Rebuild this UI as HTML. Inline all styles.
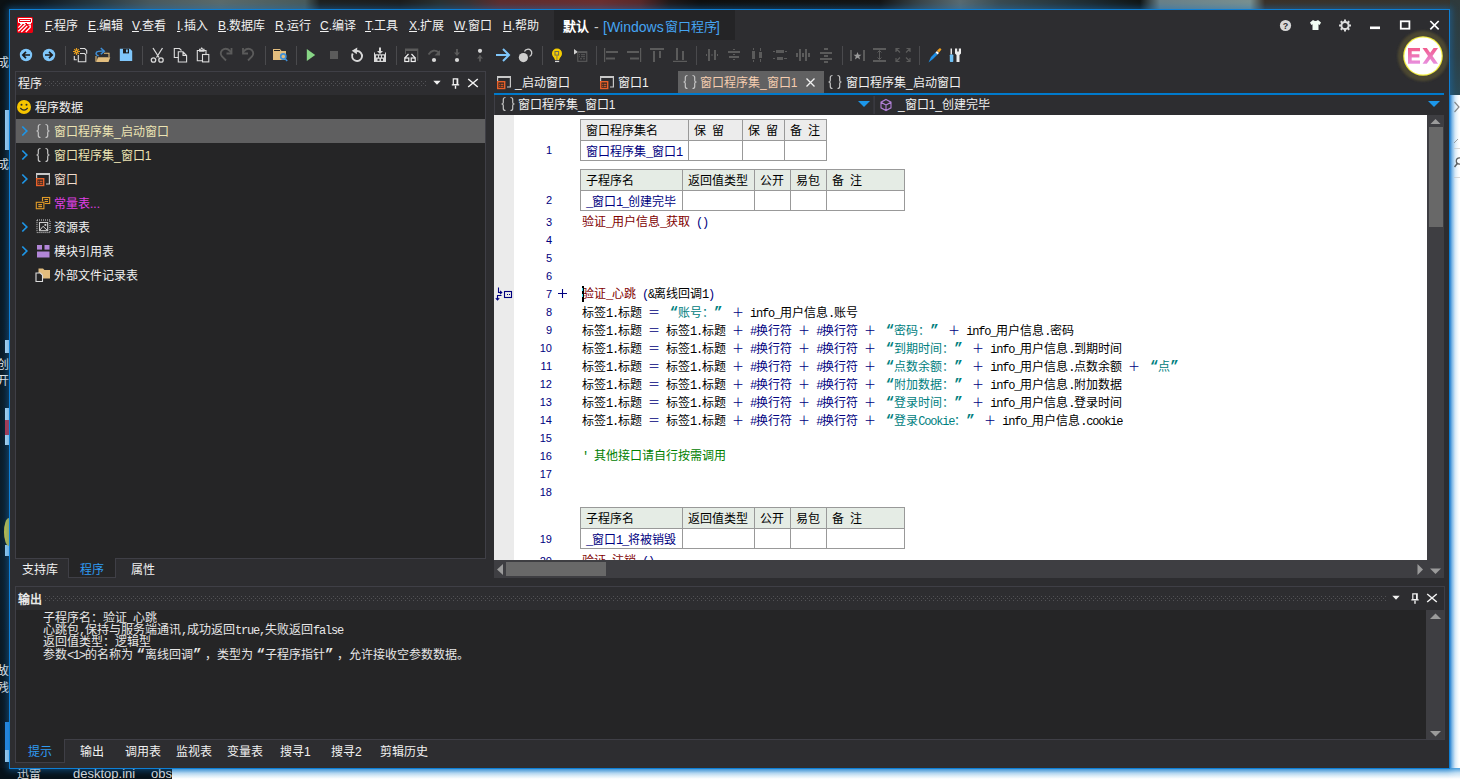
<!DOCTYPE html>
<html lang="zh-CN">
<head>
<meta charset="utf-8">
<style>
*{box-sizing:border-box;margin:0;padding:0}
html,body{width:1460px;height:779px;overflow:hidden}
body{position:relative;background:#0b141b;font-family:"Liberation Sans",sans-serif;font-size:12px;color:#f1f1f1}
.a{position:absolute}
.t{position:absolute;white-space:nowrap;line-height:16px;font-family:"Liberation Sans",sans-serif}
.code{position:absolute;white-space:nowrap;line-height:16px;height:16px;font-family:"Liberation Mono",monospace;font-size:12px}
.sa{font-family:"Liberation Mono",monospace;font-size:12px;letter-spacing:-1.2px;position:relative;top:0px}
.ln{position:absolute;width:40px;text-align:right;font-family:"Liberation Sans",sans-serif;font-size:11px;line-height:16px;color:#000080}
.sc{font-size:12px}
.uc{font-size:12px}
.sp{display:inline-block;width:12px;font-size:12px}
.q{font-weight:bold;font-size:14px}
.menu u{text-decoration:underline;text-underline-offset:1px}
svg{position:absolute;left:0;top:0}
</style>
</head>
<body>

<div class="a" style="left:0px;top:0px;width:1460px;height:10px;background:linear-gradient(90deg,#0c1012 0.00%,#101820 2.74%,#2a3a42 6.85%,#4a585c 10.27%,#5c6a6a 15.07%,#4a5a5a 20.89%,#1e2020 21.92%,#1c1c1c 27.40%,#2a3030 30.14%,#3a3030 32.19%,#5e2c2c 34.25%,#6c2e2e 41.10%,#5a2828 43.84%,#201818 45.89%,#0e0e0e 47.95%,#141414 60.27%,#3a4448 63.01%,#5a6a70 65.75%,#3a4a50 68.49%,#1e2a30 74.66%,#101414 78.08%,#6a8088 79.45%,#7a9090 85.62%,#3a3028 86.64%,#36342e 100.00%);"></div>
<div class="a" style="left:0px;top:0px;width:10px;height:779px;background:linear-gradient(180deg,#0b1114 0%,#0a1a26 40%,#0c1e2c 70%,#0a141c 100%);"></div>
<div class="a" style="left:1450px;top:0px;width:10px;height:95px;background:linear-gradient(180deg,#2e3a3c 0%,#2c4048 60%,#2a4a58 100%);"></div>
<div class="a" style="left:1450px;top:95px;width:10px;height:684px;background:linear-gradient(90deg,#3d8fd8 0px,#9ccaf0 2px,#e4f1fb 5px,#ffffff 9px);"></div>
<svg width="10" height="100" style="left:1450px;top:95px"><path d="M4.5 7 L9 12 L4.5 17" stroke="#8a8a8a" stroke-width="1.2" fill="none"/><path d="M4 48 L8 44" stroke="#a0a0a0" stroke-width="1"/><rect x="4" y="53" width="6" height="1" fill="#d8d8d8"/><rect x="4" y="82" width="6" height="1" fill="#d8d8d8"/><circle cx="9.5" cy="66" r="3.2" stroke="#606060" stroke-width="1.3" fill="none"/><path d="M4.5 72 L7.3 68.5" stroke="#606060" stroke-width="1.5"/></svg>
<div class="a" style="left:0px;top:768px;width:172px;height:11px;background:#06121a;"></div>
<div class="a" style="left:172px;top:768px;width:1288px;height:11px;background:linear-gradient(180deg,#4d9fdc 0%,#c4e0f4 45%,#ffffff 100%);"></div>
<div class="t" style="left:17px;top:766px;font-size:12px;color:#ddd">迅雷</div>
<div class="t" style="left:73px;top:766px;font-size:13px;color:#ddd">desktop.ini</div>
<div class="t" style="left:151px;top:766px;font-size:13px;color:#ddd">obs</div>
<div class="a" style="left:5px;top:110px;width:4px;height:40px;background:#a8d4f4;"></div>
<div class="a" style="left:5px;top:340px;width:4px;height:13px;background:#b8dcf4;"></div>
<div class="a" style="left:5px;top:408px;width:4px;height:37px;background:#b8dcf4;"></div>
<div class="a" style="left:5px;top:545px;width:4px;height:11px;background:#9ccff2;"></div>
<div class="a" style="left:5px;top:722px;width:4px;height:28px;background:#2a88e0;"></div>
<div class="a" style="left:5px;top:750px;width:4px;height:12px;background:#a8d4f4;"></div>
<div class="a" style="left:5px;top:420px;width:4px;height:15px;background:#c03040;"></div>
<div class="a" style="left:4px;top:518px;width:10px;height:28px;border-radius:50%;background:#c8c040"></div>
<div class="t" style="left:-3px;top:55px;font-size:12px;color:#e8e8e8">成品</div>
<div class="t" style="left:-3px;top:157px;font-size:12px;color:#e8e8e8">成者</div>
<div class="t" style="left:-3px;top:357px;font-size:12px;color:#e8e8e8">创</div>
<div class="t" style="left:-3px;top:373px;font-size:12px;color:#e8e8e8">开</div>
<div class="t" style="left:-3px;top:663px;font-size:12px;color:#e8e8e8">故障</div>
<div class="t" style="left:-3px;top:680px;font-size:12px;color:#e8e8e8">残</div>
<div class="a" style="left:9px;top:9px;width:1441px;height:760px;background:#2d2d30;border:1px solid #0e7fd4;box-shadow:0 0 6px 2px rgba(20,120,200,0.45)"></div>
<svg width="16" height="16" style="left:17px;top:17px" viewBox="0 0 16 16">
<path d="M1 0 H15 L16 1 V15 L15 16 H1 L0 15 V1 Z" fill="#f00010"/>
<path d="M1.5 1.5 H14.5 V5.5 H1.5 Z" fill="none" stroke="#fff" stroke-width="1"/>
<rect x="3" y="3" width="10" height="1" fill="#fff"/>
<path d="M3 6.5 H8 M10 6.5 H14" stroke="#fff" stroke-width="1"/>
<path d="M1.3 10.6 L5 7 M1.3 14.3 L8.6 7 M4.3 15 L10.3 9 M8.7 15 L13.2 10.5 V8 H11.5" stroke="#fff" stroke-width="1.25" fill="none"/>
</svg>
<div class="t menu" style="left:45px;top:18px;color:#f1f1f1"><u>F</u>.程序</div>
<div class="t menu" style="left:88px;top:18px;color:#f1f1f1"><u>E</u>.编辑</div>
<div class="t menu" style="left:132px;top:18px;color:#f1f1f1"><u>V</u>.查看</div>
<div class="t menu" style="left:177px;top:18px;color:#f1f1f1"><u>I</u>.插入</div>
<div class="t menu" style="left:218px;top:18px;color:#f1f1f1"><u>B</u>.数据库</div>
<div class="t menu" style="left:275px;top:18px;color:#f1f1f1"><u>R</u>.运行</div>
<div class="t menu" style="left:320px;top:18px;color:#f1f1f1"><u>C</u>.编译</div>
<div class="t menu" style="left:365px;top:18px;color:#f1f1f1"><u>T</u>.工具</div>
<div class="t menu" style="left:409px;top:18px;color:#f1f1f1"><u>X</u>.扩展</div>
<div class="t menu" style="left:454px;top:18px;color:#f1f1f1"><u>W</u>.窗口</div>
<div class="t menu" style="left:503px;top:18px;color:#f1f1f1"><u>H</u>.帮助</div>
<div class="a" style="left:554px;top:10px;width:181px;height:30px;background:#242426;"></div>
<div class="t" style="left:563px;top:19px;color:#fff;font-size:13px;font-weight:bold">默认</div>
<div class="t" style="left:594px;top:19px;color:#c8c8c8;font-size:14px">-</div>
<div class="t" style="left:603px;top:19px;color:#45a4f2;font-size:14px">[Windows</div>
<div class="t" style="left:665px;top:19px;color:#45a4f2;font-size:13px">窗口程序</div>
<div class="t" style="left:716px;top:19px;color:#45a4f2;font-size:14px">]</div>
<svg width="1460" height="100">
<circle cx="1285.5" cy="25.5" r="5.6" fill="#d8d8d8"/>
<text x="1285.5" y="29" font-family="Liberation Sans" font-size="9" font-weight="bold" text-anchor="middle" fill="#2d2d30">?</text>
<path d="M1313 20 L1310 22.5 L1311.3 25 L1312.5 24.3 L1312.5 30 L1318.5 30 L1318.5 24.3 L1319.7 25 L1321 22.5 L1318 20 Q1315.5 22 1313 20 Z" fill="#f4fff4"/>
<g transform="translate(1345,25.5)" fill="#dcdcdc">
<circle r="3.6" fill="none" stroke="#dcdcdc" stroke-width="2"/>
<rect x="-1" y="-6" width="2" height="3"/><rect x="-1" y="3" width="2" height="3"/>
<rect x="-6" y="-1" width="3" height="2"/><rect x="3" y="-1" width="3" height="2"/>
<rect x="-1" y="-6" width="2" height="3" transform="rotate(45)"/><rect x="-1" y="3" width="2" height="3" transform="rotate(45)"/>
<rect x="-6" y="-1" width="3" height="2" transform="rotate(45)"/><rect x="3" y="-1" width="3" height="2" transform="rotate(45)"/>
</g>
<rect x="1370" y="26.5" width="10" height="2.6" fill="#fff"/>
<rect x="1400.8" y="21.3" width="8.6" height="7.4" fill="none" stroke="#fff" stroke-width="1.8"/>
<path d="M1430.3 21 L1438.7 29.4 M1438.7 21 L1430.3 29.4" stroke="#fff" stroke-width="1.7"/>
<defs><filter id="bl" x="-20%" y="-20%" width="140%" height="140%"><feGaussianBlur stdDeviation="1.2"/></filter></defs>
<circle cx="1423" cy="56" r="25.3" fill="#4b4630" filter="url(#bl)"/>
<circle cx="1423" cy="56" r="19.8" fill="#f3ee40"/>
<circle cx="1423" cy="56" r="18.6" fill="#fff"/>
<defs><linearGradient id="exg" x1="0" y1="0" x2="0" y2="1"><stop offset="0" stop-color="#f25b8c"/><stop offset="1" stop-color="#e890e0"/></linearGradient></defs>
<path d="M1408 48 H1420 V51.2 H1411.7 V54.3 H1419.4 V57.4 H1411.7 V60.6 H1420 V63.8 H1408 Z" fill="url(#exg)"/>
<path d="M1422.5 48 H1426.8 L1430.2 52.8 L1433.6 48 H1438 L1432.5 55.9 L1438 63.8 H1433.6 L1430.2 59 L1426.8 63.8 H1422.5 L1428 55.9 Z" fill="url(#exg)"/>
</svg>
<svg width="1000" height="72">
<g stroke="#4a4a4d" stroke-width="1">
<line x1="65.5" y1="46" x2="65.5" y2="65"/><line x1="142.5" y1="46" x2="142.5" y2="65"/>
<line x1="265.5" y1="46" x2="265.5" y2="65"/><line x1="296.5" y1="46" x2="296.5" y2="65"/>
<line x1="396.5" y1="46" x2="396.5" y2="65"/><line x1="542.5" y1="46" x2="542.5" y2="65"/>
<line x1="596.5" y1="46" x2="596.5" y2="65"/><line x1="696.5" y1="46" x2="696.5" y2="65"/>
<line x1="842.5" y1="46" x2="842.5" y2="65"/><line x1="919.5" y1="46" x2="919.5" y2="65"/>
</g>
<!-- back / forward -->
<circle cx="26" cy="55" r="6.2" fill="#7fc6fa"/>
<path d="M30 55 H23 M26 51.8 L22.8 55 L26 58.2" stroke="#1b1b1c" stroke-width="1.7" fill="none"/>
<circle cx="49" cy="55" r="6.2" fill="#7fc6fa"/>
<path d="M45 55 H52 M49 51.8 L52.2 55 L49 58.2" stroke="#1b1b1c" stroke-width="1.7" fill="none"/>
<!-- new -->
<g stroke="#e39c1f" stroke-width="1.2"><path d="M76.5 48 V55 M73 51.5 H80 M74.2 49.2 L78.8 53.8 M78.8 49.2 L74.2 53.8"/></g>
<circle cx="76.5" cy="51.5" r="1.5" fill="#e39c1f"/><circle cx="76.5" cy="51.5" r="0.5" fill="#2d2d30"/>
<path d="M80 48.5 H84.7 L86.7 50.4 V53.8" stroke="#dedede" stroke-width="1.1" fill="none"/>
<path d="M80 53.5 H84.5 L85.8 54.8 V61.7 H78.3 V55" stroke="#dedede" stroke-width="1.1" fill="none"/>
<path d="M74.3 56 V59.7 H76.8" stroke="#dedede" stroke-width="1.1" fill="none"/>
<!-- open -->
<path d="M96 56 V61.8 M104 53.3 H109 V57" stroke="#e2bd7e" stroke-width="1.1" fill="none"/>
<path d="M98 57.3 H110.3 L108.5 61.9 H96.2 Z" fill="#e2bd7e"/>
<path d="M98.6 55.8 Q95 54.5 96.5 52.3 Q97.8 50.8 103.5 51" stroke="#3f8fd8" stroke-width="1.5" fill="none"/>
<path d="M100.8 48 L104.3 51.2 L100.8 54.3" stroke="#3f8fd8" stroke-width="1.5" fill="none"/>
<!-- save -->
<path d="M119.8 48.8 H130 L132.2 51 V61 H119.8 Z" fill="#7fc6fa"/>
<rect x="123" y="48.8" width="6" height="4.6" fill="#1e1e1e"/><rect x="126" y="49.5" width="1.8" height="2.8" fill="#7fc6fa"/>
<!-- cut -->
<g stroke="#d8d8d8" stroke-width="1.3" fill="none">
<path d="M153 48 L159 57.5 M162.5 48 L156.5 57.5"/>
<circle cx="153.5" cy="60" r="2.2"/><circle cx="161" cy="60" r="2.2"/>
</g>
<!-- copy -->
<g stroke="#dcdcdc" stroke-width="1.1" fill="none">
<path d="M178.5 57.5 H174.3 V48.5 H179.5 L181.5 50.5"/>
<path d="M178.3 51.8 H183 L186.6 55.4 V62 H178.3 Z M183 51.8 V55.4 H186.6"/>
</g>
<!-- paste -->
<g stroke="#dcdcdc" stroke-width="1.1" fill="none">
<path d="M202.3 60.8 H197.3 V50.5 H206 V54.2"/>
<path d="M199.6 51.2 V49.2 H201 L201.8 48 L202.6 49.2 H204 V51.2 Z"/>
<rect x="202.5" y="54.5" width="6.3" height="7.4"/>
</g>
<!-- redo undo (disabled) -->
<path d="M226 60.5 L222 56.5 Q219.5 53 222 50.3 Q226 47 230 51 L231 52.5" stroke="#5b5b5b" stroke-width="1.8" fill="none"/>
<path d="M231.5 48 V53.5 H226.5" stroke="#5b5b5b" stroke-width="1.8" fill="none"/>
<path d="M248 60.5 L252 56.5 Q254.5 53 252 50.3 Q248 47 244 51 L243 52.5" stroke="#5b5b5b" stroke-width="1.8" fill="none"/>
<path d="M243 48 V53.5 H248" stroke="#5b5b5b" stroke-width="1.8" fill="none"/>
<!-- folder search -->
<path d="M273 49 H280 L281.5 51 H286 V60 H273 Z" fill="#e2bd7e"/>
<rect x="274" y="50" width="6" height="1" fill="#1e1e1e"/>
<circle cx="283.3" cy="56.5" r="2.6" fill="none" stroke="#3f8fd8" stroke-width="1.6"/>
<path d="M285 58.5 L287.2 61" stroke="#3f8fd8" stroke-width="1.5"/>
<!-- play stop -->
<path d="M306.8 49 L315.2 55 L306.8 61 Z" fill="#88d686"/>
<rect x="330" y="51" width="8" height="8" fill="#5b5b5b"/>
<!-- refresh -->
<path d="M357 51 A5 5 0 1 1 352.7 53.5" stroke="#d8d8d8" stroke-width="1.9" fill="none"/>
<path d="M351.8 50.8 L357.3 47.6 L356.8 54.2 Z" fill="#d8d8d8"/>
<!-- install -->
<g fill="#d8d8d8">
<path d="M379 47.5 H381 V51 H383 L380 54 L377 51 H379 Z"/>
<path d="M374 52.5 H375 V54.2 H385 V52.5 H386 V62 H374 Z"/>
</g>
<g fill="#2d2d30"><rect x="376" y="55.5" width="2" height="2"/><rect x="379" y="55.5" width="2" height="2"/><rect x="382" y="55.5" width="2" height="2"/>
<rect x="377.5" y="58.8" width="2" height="2"/><rect x="381" y="58.8" width="2" height="2"/></g>
<!-- glasses window -->
<path d="M405 49 H417.7 V60.7" stroke="#5b5b5b" stroke-width="1.2" fill="none"/>
<rect x="405" y="49" width="12.7" height="2" fill="#5b5b5b"/><rect x="405" y="49" width="1" height="5" fill="#5b5b5b"/>
<g stroke="#efefef" stroke-width="1.2" fill="none">
<path d="M408.5 54 L404.8 58 M411.5 54 L415.2 58"/>
<rect x="404.8" y="58" width="4" height="3.5"/><rect x="411.2" y="58" width="4" height="3.5"/>
</g>
<!-- step over/into/out -->
<path d="M428.5 54.5 Q433 48 439 52.5" stroke="#5b5b5b" stroke-width="1.8" fill="none"/>
<path d="M440 50 V55.5 H434.5 Z" fill="#5b5b5b"/>
<circle cx="434" cy="60" r="2.1" fill="#d8d8d8"/>
<path d="M457 49 V55" stroke="#5b5b5b" stroke-width="1.8"/><path d="M454 52.5 L457 56 L460 52.5 Z" fill="#5b5b5b"/>
<circle cx="457" cy="60" r="2.1" fill="#d8d8d8"/>
<circle cx="480" cy="50.8" r="2.1" fill="#d8d8d8"/>
<path d="M480 55.5 V61.5" stroke="#5b5b5b" stroke-width="1.8"/><path d="M477 58.5 L480 55 L483 58.5 Z" fill="#5b5b5b"/>
<!-- blue arrow -->
<path d="M496 55 H509 M503 49 L509 55 L503 61" stroke="#7fc6fa" stroke-width="2" fill="none"/>
<!-- node -->
<circle cx="523.4" cy="57.6" r="4.6" fill="#cfcfcf"/>
<path d="M524.5 51.5 A3.8 3.8 0 1 1 529.5 56.5" stroke="#cfcfcf" stroke-width="1.3" fill="none"/>
<!-- bulb -->
<circle cx="557" cy="53.5" r="5" fill="#f5cd00"/><path d="M553.2 56 L555 60 H559 L560.8 56 Z" fill="#f5cd00"/>
<rect x="555" y="51.5" width="3.6" height="3.6" fill="#f5cd00" stroke="#6b6b5b" stroke-width="1"/>
<rect x="556.3" y="55" width="1.2" height="5" fill="#9a8a40"/>
<rect x="555" y="60.8" width="4.2" height="1.3" fill="#dcdcdc"/>
<!-- list -->
<path d="M574 49 L578 52 L574 54.5 Z" fill="#d0d0d0"/>
<rect x="577.8" y="51.8" width="9" height="9.5" fill="none" stroke="#5b5b5b" stroke-width="1.1"/>
<rect x="578" y="51.5" width="9" height="1.6" fill="#5b5b5b"/>
<g fill="#5b5b5b"><rect x="579" y="54.2" width="1" height="1"/><rect x="581" y="54.2" width="4" height="1"/><rect x="579" y="56.2" width="1" height="1"/><rect x="581" y="56.2" width="4" height="1"/><rect x="580" y="58.3" width="2" height="1"/><rect x="583" y="58.3" width="2" height="1"/></g>
<!-- align group -->
<g fill="#5b5b5b">
<rect x="604" y="48" width="1.2" height="14"/><rect x="606" y="51" width="12" height="2"/><rect x="606" y="57.5" width="9" height="2"/>
<rect x="640" y="48" width="1.2" height="14"/><rect x="627" y="51" width="12" height="2"/><rect x="630" y="57.5" width="9" height="2"/>
<rect x="650" y="48" width="14" height="2"/><rect x="653" y="51" width="2" height="11"/><rect x="659" y="51" width="2" height="7"/>
<rect x="673" y="60.8" width="14" height="1.2"/><rect x="676" y="48" width="2" height="12"/><rect x="682" y="51" width="2" height="9"/>
<rect x="708" y="49" width="2" height="12"/><rect x="714" y="50" width="2" height="10"/><rect x="706" y="54" width="1" height="2"/><rect x="711.5" y="54" width="1" height="2"/><rect x="717" y="54" width="1" height="2"/>
<rect x="728" y="51" width="12" height="2"/><rect x="729" y="56" width="10" height="2"/><rect x="733" y="49" width="2" height="1"/><rect x="733" y="54" width="2" height="1"/><rect x="733" y="59" width="2" height="1"/>
<rect x="752" y="51" width="3" height="8"/><rect x="759" y="52" width="3" height="6"/><rect x="753" y="48" width="1" height="2"/><rect x="753" y="60" width="1" height="2"/><rect x="760" y="48" width="1" height="3"/><rect x="760" y="59" width="1" height="3"/>
<rect x="776" y="50" width="8" height="3"/><rect x="777" y="57" width="6" height="3"/><rect x="773" y="51" width="2" height="1"/><rect x="785" y="51" width="2" height="1"/><rect x="773" y="58" width="2" height="1"/><rect x="784" y="58" width="3" height="1"/>
<rect x="799" y="49" width="2" height="12"/><rect x="805" y="49" width="2" height="12"/><rect x="796" y="53" width="2" height="4"/><rect x="802" y="53" width="2" height="4"/><rect x="808" y="53" width="2" height="4"/>
<rect x="820" y="52" width="12" height="2"/><rect x="820" y="58" width="12" height="2"/><rect x="824" y="48" width="4" height="2"/><rect x="824" y="55" width="4" height="2"/><rect x="824" y="61" width="4" height="2"/>
<rect x="850" y="50" width="2" height="11"/><rect x="863" y="50" width="2" height="11"/>
<rect x="873" y="48" width="13" height="2"/><rect x="873" y="60" width="13" height="2"/>
</g>
<path d="M857.5 52 L858.6 54.8 L861.5 54.8 L859.2 56.6 L860.1 59.5 L857.5 57.8 L854.9 59.5 L855.8 56.6 L853.5 54.8 L856.4 54.8 Z" fill="#9a9a9a"/>
<path d="M879.5 50.5 V59.5 M877.5 52.5 L879.5 50.5 L881.5 52.5 M877.5 57.5 L879.5 59.5 L881.5 57.5" stroke="#5b5b5b" stroke-width="1" fill="none"/>
<g stroke="#5b5b5b" stroke-width="1.2" fill="none">
<path d="M896 52 V48.5 H899.5 M896 48.5 L900 52.5 M910 52 V48.5 H906.5 M910 48.5 L906 52.5 M896 58 V61.5 H899.5 M896 61.5 L900 57.5 M910 58 V61.5 H906.5 M910 61.5 L906 57.5"/>
</g>
<!-- dropper -->
<path d="M928.5 62.5 L931 57 L935.5 52.5 L937.5 54.5 L933 59 Z" fill="#1e90e8"/>
<path d="M935.5 52.5 L937 51 L939 53 L937.5 54.5 Z" fill="#fff"/>
<path d="M937 50.5 L940 48 L941.5 49.5 L939 52.5 Z" fill="#f0a020"/>
<!-- tools -->
<rect x="950.5" y="48.5" width="1.5" height="6" fill="#e8e8e8"/><rect x="949.8" y="54.5" width="3.5" height="7.5" rx="0.8" fill="#6ec0f5"/>
<path d="M955 48.5 H957.2 V51.5 H958.8 V48.5 H961 V53.5 L959.5 55 V62 H956.5 V55 L955 53.5 Z" fill="#ececec"/>
</svg>
<div class="a" style="left:15px;top:71px;width:471px;height:488px;background:#252526;border:1px solid #3f3f46"></div>
<div class="a" style="left:16px;top:72px;width:469px;height:23px;background:#2d2d30;"></div>
<div class="t" style="left:18px;top:76px;color:#f1f1f1;font-size:12px;"><span class="uc">程序</span></div>
<svg width="381" height="5" style="left:45px;top:81px"><defs><pattern id="gp81" width="4" height="4" patternUnits="userSpaceOnUse"><rect x="0" y="0" width="1" height="1" fill="#525256"/><rect x="2" y="2" width="1" height="1" fill="#525256"/></pattern></defs><rect width="381" height="5" fill="url(#gp81)"/></svg>
<svg width="1460" height="779"><path d="M433.3 80.8 H440.7 L437.0 84.8 Z" fill="#f1f1f1"/><path d="M452.7 78.3 H458.3 V84.2 H459.2 V85.6 H451.8 V84.2 H452.7 Z" fill="#f1f1f1"/><rect x="454.8" y="85.6" width="1.4" height="3.2" fill="#f1f1f1"/><rect x="453.9" y="79.5" width="2.6" height="4.5" fill="#2d2d30"/><path d="M468.2 79.0 L477.8 87.0 M477.8 79.0 L468.2 87.0" stroke="#f1f1f1" stroke-width="1.5"/></svg>
<div class="a" style="left:16px;top:119px;width:469px;height:24px;background:#5f5f60;"></div>
<div class="t" style="left:35px;top:100px;color:#f1f1f1;font-size:12px;"><span class="uc">程序数据</span></div>
<div class="t" style="left:54px;top:124px;color:#ece4b4;font-size:12px;"><span class="uc">窗口程序集</span>_<span class="uc">启动窗口</span></div>
<div class="t" style="left:54px;top:148px;color:#ece4b4;font-size:12px;"><span class="uc">窗口程序集</span>_<span class="uc">窗口</span>1</div>
<div class="t" style="left:54px;top:172px;color:#f2dccb;font-size:12px;"><span class="uc">窗口</span></div>
<div class="t" style="left:54px;top:196px;color:#e040e6;font-size:12px;"><span class="uc">常量表</span>...</div>
<div class="t" style="left:54px;top:220px;color:#f1f1f1;font-size:12px;"><span class="uc">资源表</span></div>
<div class="t" style="left:54px;top:244px;color:#f1f1f1;font-size:12px;"><span class="uc">模块引用表</span></div>
<div class="t" style="left:54px;top:268px;color:#f1f1f1;font-size:12px;"><span class="uc">外部文件记录表</span></div>
<svg width="500" height="300">
<circle cx="24" cy="107" r="7" fill="#f6c500"/>
<circle cx="21.5" cy="104.8" r="1" fill="#2b2b2b"/><circle cx="26.5" cy="104.8" r="1" fill="#2b2b2b"/>
<path d="M20.3 108 Q24 112.3 27.7 108" stroke="#2b2b2b" stroke-width="1.2" fill="none"/>
<path d="M22.3 126.5 L26.8 131.0 L22.3 135.5" stroke="#1e95e6" stroke-width="1.7" fill="none"/><path d="M22.3 150.5 L26.8 155.0 L22.3 159.5" stroke="#1e95e6" stroke-width="1.7" fill="none"/><path d="M22.3 174.5 L26.8 179.0 L22.3 183.5" stroke="#1e95e6" stroke-width="1.7" fill="none"/><path d="M22.3 222.5 L26.8 227.0 L22.3 231.5" stroke="#1e95e6" stroke-width="1.7" fill="none"/><path d="M22.3 246.5 L26.8 251.0 L22.3 255.5" stroke="#1e95e6" stroke-width="1.7" fill="none"/><g stroke="#c4c4c4" stroke-width="1.2" fill="none"><path d="M40.5 124.5 Q38.3 124.5 38.3 126.5 V129.5 Q38.3 131.0 36.5 131.0 Q38.3 131.0 38.3 132.5 V135.5 Q38.3 137.5 40.5 137.5"/><path d="M45.5 124.5 Q47.7 124.5 47.7 126.5 V129.5 Q47.7 131.0 49.5 131.0 Q47.7 131.0 47.7 132.5 V135.5 Q47.7 137.5 45.5 137.5"/></g><g stroke="#c4c4c4" stroke-width="1.2" fill="none"><path d="M40.5 148.5 Q38.3 148.5 38.3 150.5 V153.5 Q38.3 155.0 36.5 155.0 Q38.3 155.0 38.3 156.5 V159.5 Q38.3 161.5 40.5 161.5"/><path d="M45.5 148.5 Q47.7 148.5 47.7 150.5 V153.5 Q47.7 155.0 49.5 155.0 Q47.7 155.0 47.7 156.5 V159.5 Q47.7 161.5 45.5 161.5"/></g><rect x="36.0" y="173.0" width="14" height="2" fill="#c8c8c8"/><path d="M49.4 175.0 V184.0 H46.0" stroke="#c8c8c8" stroke-width="1.2" fill="none"/><path d="M36.6 175.0 V178.0" stroke="#c8c8c8" stroke-width="1.2" fill="none"/><rect x="36.0" y="178.0" width="8.4" height="8.2" fill="#e8602a"/><rect x="37.4" y="179.4" width="5.6" height="5.4" fill="#3a2a22"/><g fill="#e8602a"><rect x="38.2" y="180.8" width="1.2" height="1"/><rect x="40.0" y="180.8" width="2.4" height="1"/><rect x="38.2" y="182.8" width="1.2" height="1"/><rect x="40.0" y="182.8" width="2.4" height="1"/></g><g stroke="#e09a28" stroke-width="1.1" fill="none">
<rect x="42.5" y="197.5" width="7.2" height="6"/><path d="M44.5 199.5 H48 M44.5 201.5 H48"/>
</g>
<rect x="35.5" y="201.3" width="9.2" height="8.2" fill="#252526"/>
<g stroke="#e09a28" stroke-width="1.1" fill="none">
<rect x="36.3" y="202.3" width="7.6" height="6.4"/><path d="M38.3 204.6 H42 M38.3 206.6 H42"/>
</g>
<rect x="37" y="220" width="13" height="12.6" fill="none" stroke="#d8d8d8" stroke-width="1" stroke-dasharray="1 1"/>
<rect x="39.5" y="222.5" width="8.2" height="8.2" fill="none" stroke="#d0d0d0" stroke-width="1.1"/>
<path d="M40 230 L43 226.3 L47 230" stroke="#d0d0d0" stroke-width="1" fill="none"/>
<rect x="44.5" y="224" width="1.8" height="1.8" fill="#d0d0d0"/>
<g fill="#b286d8"><rect x="37" y="245" width="5" height="4.6"/><rect x="44.5" y="245" width="5" height="4.6"/><rect x="37" y="251.5" width="12.5" height="6"/></g>
<path d="M38.5 268.5 H43 L44.5 270 H50 V278.5 H38.5 Z" fill="#e2bd7e"/>
<path d="M36 273 H40.3 L42.5 275.2 V281.5 H36 Z" fill="#252526" stroke="#dcdcdc" stroke-width="1.1"/>
</svg>
<div class="a" style="left:68px;top:558px;width:48px;height:20px;background:#252526;border:1px solid #3f3f46;border-top:none"></div>
<div class="t" style="left:22px;top:562px;color:#f1f1f1;font-size:12px;"><span class="uc">支持库</span></div>
<div class="t" style="left:80px;top:562px;color:#2f9bf2;font-size:12px;"><span class="uc">程序</span></div>
<div class="t" style="left:131px;top:562px;color:#f1f1f1;font-size:12px;"><span class="uc">属性</span></div>
<svg width="1460" height="120"><rect x="497.0" y="76.0" width="14" height="2" fill="#c8c8c8"/><path d="M510.4 78.0 V87.0 H507.0" stroke="#c8c8c8" stroke-width="1.2" fill="none"/><path d="M497.6 78.0 V81.0" stroke="#c8c8c8" stroke-width="1.2" fill="none"/><rect x="497.0" y="81.0" width="8.4" height="8.2" fill="#e8602a"/><rect x="498.4" y="82.4" width="5.6" height="5.4" fill="#3a2a22"/><g fill="#e8602a"><rect x="499.2" y="83.8" width="1.2" height="1"/><rect x="501.0" y="83.8" width="2.4" height="1"/><rect x="499.2" y="85.8" width="1.2" height="1"/><rect x="501.0" y="85.8" width="2.4" height="1"/></g><rect x="600.0" y="76.0" width="14" height="2" fill="#c8c8c8"/><path d="M613.4 78.0 V87.0 H610.0" stroke="#c8c8c8" stroke-width="1.2" fill="none"/><path d="M600.6 78.0 V81.0" stroke="#c8c8c8" stroke-width="1.2" fill="none"/><rect x="600.0" y="81.0" width="8.4" height="8.2" fill="#e8602a"/><rect x="601.4" y="82.4" width="5.6" height="5.4" fill="#3a2a22"/><g fill="#e8602a"><rect x="602.2" y="83.8" width="1.2" height="1"/><rect x="604.0" y="83.8" width="2.4" height="1"/><rect x="602.2" y="85.8" width="1.2" height="1"/><rect x="604.0" y="85.8" width="2.4" height="1"/></g></svg>
<div class="t" style="left:515px;top:75px;color:#f1f1f1;font-size:12px;">_<span class="uc">启动窗口</span></div>
<div class="t" style="left:618px;top:75px;color:#f1f1f1;font-size:12px;"><span class="uc">窗口</span>1</div>
<div class="a" style="left:678px;top:71px;width:146px;height:22px;background:#616162;"></div>
<svg width="1460" height="120">
<g stroke="#c4c4c4" stroke-width="1.2" fill="none"><path d="M687.5 75.5 Q685.3 75.5 685.3 77.5 V80.5 Q685.3 82.0 683.5 82.0 Q685.3 82.0 685.3 83.5 V86.5 Q685.3 88.5 687.5 88.5"/><path d="M692.5 75.5 Q694.7 75.5 694.7 77.5 V80.5 Q694.7 82.0 696.5 82.0 Q694.7 82.0 694.7 83.5 V86.5 Q694.7 88.5 692.5 88.5"/></g>
<path d="M806.5 78.5 L814.5 86.5 M814.5 78.5 L806.5 86.5" stroke="#f1f1f1" stroke-width="1.3"/>
<g stroke="#c4c4c4" stroke-width="1.2" fill="none"><path d="M832.5 75.5 Q830.3 75.5 830.3 77.5 V80.5 Q830.3 82.0 828.5 82.0 Q830.3 82.0 830.3 83.5 V86.5 Q830.3 88.5 832.5 88.5"/><path d="M837.5 75.5 Q839.7 75.5 839.7 77.5 V80.5 Q839.7 82.0 841.5 82.0 Q839.7 82.0 839.7 83.5 V86.5 Q839.7 88.5 837.5 88.5"/></g>
</svg>
<div class="t" style="left:700px;top:75px;color:#f5cdb0;font-size:12px;"><span class="uc">窗口程序集</span>_<span class="uc">窗口</span>1</div>
<div class="t" style="left:846px;top:75px;color:#f1f1f1;font-size:12px;"><span class="uc">窗口程序集</span>_<span class="uc">启动窗口</span></div>
<div class="a" style="left:494px;top:93px;width:950px;height:2px;background:#007acc;"></div>
<div class="a" style="left:494px;top:95px;width:950px;height:20px;background:#2d2d30;border-left:1px solid #3f3f46"></div>
<svg width="1460" height="120">
<g stroke="#c4c4c4" stroke-width="1.2" fill="none"><path d="M505.5 97.5 Q503.3 97.5 503.3 99.5 V102.5 Q503.3 104.0 501.5 104.0 Q503.3 104.0 503.3 105.5 V108.5 Q503.3 110.5 505.5 110.5"/><path d="M510.5 97.5 Q512.7 97.5 512.7 99.5 V102.5 Q512.7 104.0 514.5 104.0 Q512.7 104.0 512.7 105.5 V108.5 Q512.7 110.5 510.5 110.5"/></g>
<path d="M858 101 H870 L864 107 Z" fill="#1c97ea"/>
<rect x="873.5" y="96" width="1.2" height="18" fill="#3f3f46"/>
<g stroke="#b180d7" stroke-width="1.1" fill="none"><path d="M886 99.5 L891 102.2 V107.8 L886 110.5 L881 107.8 V102.2 Z M881 102.2 L886 105 L891 102.2 M886 105 V110.5"/></g>
<path d="M1428 101 H1440 L1434 107 Z" fill="#1c97ea"/>
</svg>
<div class="t" style="left:518px;top:97px;color:#f1f1f1;font-size:12px;"><span class="uc">窗口程序集</span>_<span class="uc">窗口</span>1</div>
<div class="t" style="left:898px;top:97px;color:#f1f1f1;font-size:12px;">_<span class="uc">窗口</span>1_<span class="uc">创建完毕</span></div>
<div class="a" style="left:494px;top:115px;width:933px;height:445px;background:#ffffff;"></div>
<div class="a" style="left:494px;top:115px;width:20px;height:445px;background:#ebebeb;"></div>
<div class="a" style="left:1427px;top:115px;width:17px;height:463px;background:#3e3e42;"></div>
<div class="a" style="left:1429px;top:127px;width:14px;height:100px;background:#686868;"></div>
<div class="a" style="left:494px;top:560px;width:933px;height:18px;background:#3e3e42;"></div>
<div class="a" style="left:506px;top:562px;width:100px;height:14px;background:#686868;"></div>
<svg width="1460" height="779">
<path d="M1430.5 124 L1435.5 119 L1440.5 124 Z" fill="#9b9b9b"/>
<path d="M497 569.5 L503 564 V575 Z" fill="#9b9b9b"/>
<path d="M1417.5 564 L1423 569.5 L1417.5 575 Z" fill="#9b9b9b"/>
<path d="M1430 568.5 H1441 L1435.5 574 Z" fill="#9b9b9b"/>
</svg>
<div class="a" style="left:15px;top:586px;width:1430px;height:154px;background:#252526;border:1px solid #3f3f46"></div>
<div class="a" style="left:16px;top:587px;width:1428px;height:23px;background:#2d2d30;"></div>
<div class="t" style="left:18px;top:592px;color:#e8e8e8;font-size:12px;"><b><span class="uc">输出</span></b></div>
<svg width="1342" height="5" style="left:45px;top:596px"><defs><pattern id="gp596" width="4" height="4" patternUnits="userSpaceOnUse"><rect x="0" y="0" width="1" height="1" fill="#525256"/><rect x="2" y="2" width="1" height="1" fill="#525256"/></pattern></defs><rect width="1342" height="5" fill="url(#gp596)"/></svg>
<svg width="1460" height="779"><path d="M1392.3 595.8 H1399.7 L1396.0 599.8 Z" fill="#f1f1f1"/><path d="M1412.2 593.3 H1417.8 V599.2 H1418.7 V600.6 H1411.3 V599.2 H1412.2 Z" fill="#f1f1f1"/><rect x="1414.3" y="600.6" width="1.4" height="3.2" fill="#f1f1f1"/><rect x="1413.4" y="594.5" width="2.6" height="4.5" fill="#2d2d30"/><path d="M1427.2 594.0 L1436.8 602.0 M1436.8 594.0 L1427.2 602.0" stroke="#f1f1f1" stroke-width="1.5"/></svg>
<div class="a" style="left:1426px;top:610px;width:18px;height:129px;background:#3e3e42;"></div>
<svg width="1460" height="779">
<path d="M1430 619 L1435.5 613.5 L1441 619 Z" fill="#9b9b9b"/>
<path d="M1430 731 H1441 L1435.5 736.5 Z" fill="#9b9b9b"/>
</svg>
<div class="a" style="left:15px;top:739px;width:50px;height:24px;background:#252526;border:1px solid #3f3f46;border-top:none"></div>
<div class="t" style="left:28px;top:744px;color:#2f9bf2;font-size:12px;"><span class="uc">提示</span></div>
<div class="t" style="left:80px;top:744px;color:#f1f1f1;font-size:12px;"><span class="uc">输出</span></div>
<div class="t" style="left:125px;top:744px;color:#f1f1f1;font-size:12px;"><span class="uc">调用表</span></div>
<div class="t" style="left:176px;top:744px;color:#f1f1f1;font-size:12px;"><span class="uc">监视表</span></div>
<div class="t" style="left:227px;top:744px;color:#f1f1f1;font-size:12px;"><span class="uc">变量表</span></div>
<div class="t" style="left:280px;top:744px;color:#f1f1f1;font-size:12px;"><span class="uc">搜寻</span>1</div>
<div class="t" style="left:331px;top:744px;color:#f1f1f1;font-size:12px;"><span class="uc">搜寻</span>2</div>
<div class="t" style="left:380px;top:744px;color:#f1f1f1;font-size:12px;"><span class="uc">剪辑历史</span></div>
<div class="a" style="left:0;top:0;width:1460px;height:779px;clip-path:inset(115px 33px 219px 494px)">
<div class="a" style="left:580px;top:119px;width:246px;height:21px;background:#ececec"></div>
<div class="a" style="left:580px;top:119px;width:1px;height:42px;background:#999"></div>
<div class="a" style="left:688px;top:119px;width:1px;height:42px;background:#999"></div>
<div class="a" style="left:742px;top:119px;width:1px;height:42px;background:#999"></div>
<div class="a" style="left:784px;top:119px;width:1px;height:42px;background:#999"></div>
<div class="a" style="left:826px;top:119px;width:1px;height:42px;background:#999"></div>
<div class="a" style="left:580px;top:119px;width:247px;height:1px;background:#999"></div>
<div class="a" style="left:580px;top:140px;width:247px;height:1px;background:#999"></div>
<div class="a" style="left:580px;top:160px;width:247px;height:1px;background:#999"></div>
<div class="code" style="left:586px;top:124px"><span style="color:#000000"><span class="sc">窗口程序集名</span></span></div>
<div class="code" style="left:694px;top:124px"><span style="color:#000000"><span class="sc">保</span><span class="sa"> </span><span class="sc">留</span></span></div>
<div class="code" style="left:748px;top:124px"><span style="color:#000000"><span class="sc">保</span><span class="sa"> </span><span class="sc">留</span></span></div>
<div class="code" style="left:790px;top:124px"><span style="color:#000000"><span class="sc">备</span><span class="sa"> </span><span class="sc">注</span></span></div>
<div class="code" style="left:586px;top:145px"><span style="color:#000080"><span class="sc">窗口程序集</span><span class="sa">_</span><span class="sc">窗口</span><span class="sa">1</span></span></div>
<div class="a" style="left:580px;top:169px;width:324px;height:21px;background:#e5ece5"></div>
<div class="a" style="left:580px;top:169px;width:1px;height:42px;background:#999"></div>
<div class="a" style="left:682px;top:169px;width:1px;height:42px;background:#999"></div>
<div class="a" style="left:754px;top:169px;width:1px;height:42px;background:#999"></div>
<div class="a" style="left:790px;top:169px;width:1px;height:42px;background:#999"></div>
<div class="a" style="left:826px;top:169px;width:1px;height:42px;background:#999"></div>
<div class="a" style="left:904px;top:169px;width:1px;height:42px;background:#999"></div>
<div class="a" style="left:580px;top:169px;width:325px;height:1px;background:#999"></div>
<div class="a" style="left:580px;top:190px;width:325px;height:1px;background:#999"></div>
<div class="a" style="left:580px;top:210px;width:325px;height:1px;background:#999"></div>
<div class="code" style="left:586px;top:174px"><span style="color:#000000"><span class="sc">子程序名</span></span></div>
<div class="code" style="left:688px;top:174px"><span style="color:#000000"><span class="sc">返回值类型</span></span></div>
<div class="code" style="left:760px;top:174px"><span style="color:#000000"><span class="sc">公开</span></span></div>
<div class="code" style="left:796px;top:174px"><span style="color:#000000"><span class="sc">易包</span></span></div>
<div class="code" style="left:832px;top:174px"><span style="color:#000000"><span class="sc">备</span><span class="sa"> </span><span class="sc">注</span></span></div>
<div class="code" style="left:586px;top:195px"><span style="color:#000080"><span class="sa">_</span><span class="sc">窗口</span><span class="sa">1_</span><span class="sc">创建完毕</span></span></div>
<div class="a" style="left:580px;top:507px;width:324px;height:21px;background:#e5ece5"></div>
<div class="a" style="left:580px;top:507px;width:1px;height:42px;background:#999"></div>
<div class="a" style="left:682px;top:507px;width:1px;height:42px;background:#999"></div>
<div class="a" style="left:754px;top:507px;width:1px;height:42px;background:#999"></div>
<div class="a" style="left:790px;top:507px;width:1px;height:42px;background:#999"></div>
<div class="a" style="left:826px;top:507px;width:1px;height:42px;background:#999"></div>
<div class="a" style="left:904px;top:507px;width:1px;height:42px;background:#999"></div>
<div class="a" style="left:580px;top:507px;width:325px;height:1px;background:#999"></div>
<div class="a" style="left:580px;top:528px;width:325px;height:1px;background:#999"></div>
<div class="a" style="left:580px;top:548px;width:325px;height:1px;background:#999"></div>
<div class="code" style="left:586px;top:512px"><span style="color:#000000"><span class="sc">子程序名</span></span></div>
<div class="code" style="left:688px;top:512px"><span style="color:#000000"><span class="sc">返回值类型</span></span></div>
<div class="code" style="left:760px;top:512px"><span style="color:#000000"><span class="sc">公开</span></span></div>
<div class="code" style="left:796px;top:512px"><span style="color:#000000"><span class="sc">易包</span></span></div>
<div class="code" style="left:832px;top:512px"><span style="color:#000000"><span class="sc">备</span><span class="sa"> </span><span class="sc">注</span></span></div>
<div class="code" style="left:586px;top:533px"><span style="color:#000080"><span class="sa">_</span><span class="sc">窗口</span><span class="sa">1_</span><span class="sc">将被销毁</span></span></div>
<div class="ln" style="left:512px;top:142px">1</div>
<div class="ln" style="left:512px;top:192px">2</div>
<div class="ln" style="left:512px;top:214px">3</div>
<div class="ln" style="left:512px;top:232px">4</div>
<div class="ln" style="left:512px;top:250px">5</div>
<div class="ln" style="left:512px;top:268px">6</div>
<div class="ln" style="left:512px;top:286px">7</div>
<div class="ln" style="left:512px;top:304px">8</div>
<div class="ln" style="left:512px;top:322px">9</div>
<div class="ln" style="left:512px;top:340px">10</div>
<div class="ln" style="left:512px;top:358px">11</div>
<div class="ln" style="left:512px;top:376px">12</div>
<div class="ln" style="left:512px;top:394px">13</div>
<div class="ln" style="left:512px;top:412px">14</div>
<div class="ln" style="left:512px;top:430px">15</div>
<div class="ln" style="left:512px;top:448px">16</div>
<div class="ln" style="left:512px;top:466px">17</div>
<div class="ln" style="left:512px;top:484px">18</div>
<div class="ln" style="left:512px;top:531px">19</div>
<div class="ln" style="left:512px;top:553px">20</div>
<div class="code" style="left:582px;top:215px"><span style="color:#800000"><span class="sc">验证</span><span class="sa">_</span><span class="sc">用户信息</span><span class="sa">_</span><span class="sc">获取</span></span><span style="color:#000080"><span class="sa"> ()</span></span></div>
<div class="code" style="left:582px;top:287px"><span style="color:#800000"><span class="sc">验证</span><span class="sa">_</span><span class="sc">心跳</span></span><span style="color:#000080"><span class="sa"> (</span></span><span style="color:#000000"><span class="sa">&amp;</span><span class="sc">离线回调</span><span class="sa">1</span></span><span style="color:#000080"><span class="sa">)</span></span></div>
<div class="code" style="left:582px;top:305px"><span style="color:#000000"><span class="sc">标签</span><span class="sa">1.</span><span class="sc">标题</span></span><span style="color:#000080"><span class="sa"> </span><span class="sp" style="text-align:center">＝</span><span class="sa"> </span></span><span style="color:#008080"><span class="sp q" style="text-align:right">“</span><span class="sc">账号</span><span class="sp" style="text-align:left">：</span><span class="sp q" style="text-align:left">”</span></span><span style="color:#000080"><span class="sa"> </span><span class="sp" style="text-align:center">＋</span><span class="sa"> </span></span><span style="color:#000000"><span class="sa">info_</span><span class="sc">用户信息</span><span class="sa">.</span><span class="sc">账号</span></span></div>
<div class="code" style="left:582px;top:323px"><span style="color:#000000"><span class="sc">标签</span><span class="sa">1.</span><span class="sc">标题</span></span><span style="color:#000080"><span class="sa"> </span><span class="sp" style="text-align:center">＝</span><span class="sa"> </span></span><span style="color:#000000"><span class="sc">标签</span><span class="sa">1.</span><span class="sc">标题</span></span><span style="color:#000080"><span class="sa"> </span><span class="sp" style="text-align:center">＋</span><span class="sa"> </span></span><span style="color:#000080"><span class="sa">#</span><span class="sc">换行符</span></span><span style="color:#000080"><span class="sa"> </span><span class="sp" style="text-align:center">＋</span><span class="sa"> </span></span><span style="color:#000080"><span class="sa">#</span><span class="sc">换行符</span></span><span style="color:#000080"><span class="sa"> </span><span class="sp" style="text-align:center">＋</span><span class="sa"> </span></span><span style="color:#008080"><span class="sp q" style="text-align:right">“</span><span class="sc">密码</span><span class="sp" style="text-align:left">：</span><span class="sp q" style="text-align:left">”</span></span><span style="color:#000080"><span class="sa"> </span><span class="sp" style="text-align:center">＋</span><span class="sa"> </span></span><span style="color:#000000"><span class="sa">info_</span><span class="sc">用户信息</span><span class="sa">.</span><span class="sc">密码</span></span></div>
<div class="code" style="left:582px;top:341px"><span style="color:#000000"><span class="sc">标签</span><span class="sa">1.</span><span class="sc">标题</span></span><span style="color:#000080"><span class="sa"> </span><span class="sp" style="text-align:center">＝</span><span class="sa"> </span></span><span style="color:#000000"><span class="sc">标签</span><span class="sa">1.</span><span class="sc">标题</span></span><span style="color:#000080"><span class="sa"> </span><span class="sp" style="text-align:center">＋</span><span class="sa"> </span></span><span style="color:#000080"><span class="sa">#</span><span class="sc">换行符</span></span><span style="color:#000080"><span class="sa"> </span><span class="sp" style="text-align:center">＋</span><span class="sa"> </span></span><span style="color:#000080"><span class="sa">#</span><span class="sc">换行符</span></span><span style="color:#000080"><span class="sa"> </span><span class="sp" style="text-align:center">＋</span><span class="sa"> </span></span><span style="color:#008080"><span class="sp q" style="text-align:right">“</span><span class="sc">到期时间</span><span class="sp" style="text-align:left">：</span><span class="sp q" style="text-align:left">”</span></span><span style="color:#000080"><span class="sa"> </span><span class="sp" style="text-align:center">＋</span><span class="sa"> </span></span><span style="color:#000000"><span class="sa">info_</span><span class="sc">用户信息</span><span class="sa">.</span><span class="sc">到期时间</span></span></div>
<div class="code" style="left:582px;top:359px"><span style="color:#000000"><span class="sc">标签</span><span class="sa">1.</span><span class="sc">标题</span></span><span style="color:#000080"><span class="sa"> </span><span class="sp" style="text-align:center">＝</span><span class="sa"> </span></span><span style="color:#000000"><span class="sc">标签</span><span class="sa">1.</span><span class="sc">标题</span></span><span style="color:#000080"><span class="sa"> </span><span class="sp" style="text-align:center">＋</span><span class="sa"> </span></span><span style="color:#000080"><span class="sa">#</span><span class="sc">换行符</span></span><span style="color:#000080"><span class="sa"> </span><span class="sp" style="text-align:center">＋</span><span class="sa"> </span></span><span style="color:#000080"><span class="sa">#</span><span class="sc">换行符</span></span><span style="color:#000080"><span class="sa"> </span><span class="sp" style="text-align:center">＋</span><span class="sa"> </span></span><span style="color:#008080"><span class="sp q" style="text-align:right">“</span><span class="sc">点数余额</span><span class="sp" style="text-align:left">：</span><span class="sp q" style="text-align:left">”</span></span><span style="color:#000080"><span class="sa"> </span><span class="sp" style="text-align:center">＋</span><span class="sa"> </span></span><span style="color:#000000"><span class="sa">info_</span><span class="sc">用户信息</span><span class="sa">.</span><span class="sc">点数余额</span></span><span style="color:#000080"><span class="sa"> </span><span class="sp" style="text-align:center">＋</span><span class="sa"> </span></span><span style="color:#008080"><span class="sp q" style="text-align:right">“</span><span class="sc">点</span><span class="sp q" style="text-align:left">”</span></span></div>
<div class="code" style="left:582px;top:377px"><span style="color:#000000"><span class="sc">标签</span><span class="sa">1.</span><span class="sc">标题</span></span><span style="color:#000080"><span class="sa"> </span><span class="sp" style="text-align:center">＝</span><span class="sa"> </span></span><span style="color:#000000"><span class="sc">标签</span><span class="sa">1.</span><span class="sc">标题</span></span><span style="color:#000080"><span class="sa"> </span><span class="sp" style="text-align:center">＋</span><span class="sa"> </span></span><span style="color:#000080"><span class="sa">#</span><span class="sc">换行符</span></span><span style="color:#000080"><span class="sa"> </span><span class="sp" style="text-align:center">＋</span><span class="sa"> </span></span><span style="color:#000080"><span class="sa">#</span><span class="sc">换行符</span></span><span style="color:#000080"><span class="sa"> </span><span class="sp" style="text-align:center">＋</span><span class="sa"> </span></span><span style="color:#008080"><span class="sp q" style="text-align:right">“</span><span class="sc">附加数据</span><span class="sp" style="text-align:left">：</span><span class="sp q" style="text-align:left">”</span></span><span style="color:#000080"><span class="sa"> </span><span class="sp" style="text-align:center">＋</span><span class="sa"> </span></span><span style="color:#000000"><span class="sa">info_</span><span class="sc">用户信息</span><span class="sa">.</span><span class="sc">附加数据</span></span></div>
<div class="code" style="left:582px;top:395px"><span style="color:#000000"><span class="sc">标签</span><span class="sa">1.</span><span class="sc">标题</span></span><span style="color:#000080"><span class="sa"> </span><span class="sp" style="text-align:center">＝</span><span class="sa"> </span></span><span style="color:#000000"><span class="sc">标签</span><span class="sa">1.</span><span class="sc">标题</span></span><span style="color:#000080"><span class="sa"> </span><span class="sp" style="text-align:center">＋</span><span class="sa"> </span></span><span style="color:#000080"><span class="sa">#</span><span class="sc">换行符</span></span><span style="color:#000080"><span class="sa"> </span><span class="sp" style="text-align:center">＋</span><span class="sa"> </span></span><span style="color:#000080"><span class="sa">#</span><span class="sc">换行符</span></span><span style="color:#000080"><span class="sa"> </span><span class="sp" style="text-align:center">＋</span><span class="sa"> </span></span><span style="color:#008080"><span class="sp q" style="text-align:right">“</span><span class="sc">登录时间</span><span class="sp" style="text-align:left">：</span><span class="sp q" style="text-align:left">”</span></span><span style="color:#000080"><span class="sa"> </span><span class="sp" style="text-align:center">＋</span><span class="sa"> </span></span><span style="color:#000000"><span class="sa">info_</span><span class="sc">用户信息</span><span class="sa">.</span><span class="sc">登录时间</span></span></div>
<div class="code" style="left:582px;top:413px"><span style="color:#000000"><span class="sc">标签</span><span class="sa">1.</span><span class="sc">标题</span></span><span style="color:#000080"><span class="sa"> </span><span class="sp" style="text-align:center">＝</span><span class="sa"> </span></span><span style="color:#000000"><span class="sc">标签</span><span class="sa">1.</span><span class="sc">标题</span></span><span style="color:#000080"><span class="sa"> </span><span class="sp" style="text-align:center">＋</span><span class="sa"> </span></span><span style="color:#000080"><span class="sa">#</span><span class="sc">换行符</span></span><span style="color:#000080"><span class="sa"> </span><span class="sp" style="text-align:center">＋</span><span class="sa"> </span></span><span style="color:#000080"><span class="sa">#</span><span class="sc">换行符</span></span><span style="color:#000080"><span class="sa"> </span><span class="sp" style="text-align:center">＋</span><span class="sa"> </span></span><span style="color:#008080"><span class="sp q" style="text-align:right">“</span><span class="sc">登录</span><span class="sa">Cookie</span><span class="sp" style="text-align:left">：</span><span class="sp q" style="text-align:left">”</span></span><span style="color:#000080"><span class="sa"> </span><span class="sp" style="text-align:center">＋</span><span class="sa"> </span></span><span style="color:#000000"><span class="sa">info_</span><span class="sc">用户信息</span><span class="sa">.cookie</span></span></div>
<div class="code" style="left:582px;top:449px"><span style="color:#008000"><span class="sa">' </span><span class="sc">其他接口请自行按需调用</span></span></div>
<div class="code" style="left:582px;top:554px"><span style="color:#800000"><span class="sc">验证</span><span class="sa">_</span><span class="sc">注销</span></span><span style="color:#000080"><span class="sa"> ()</span></span></div>
</div>
<svg width="1460" height="779">
<g stroke="#000080" stroke-width="1.1" fill="none">
<path d="M498.5 287.5 V292.5 H501"/><path d="M500 290.8 L501.8 292.5 L500 294.2"/>
<path d="M501.5 295.5 H497.5 V300"/><path d="M495.8 298.2 L497.5 300 L499.2 298.2"/>
<rect x="504.5" y="291.5" width="7" height="6"/>
</g>
<rect x="507" y="294" width="1" height="1" fill="#000080"/><rect x="509" y="294" width="1" height="1" fill="#000080"/>
<path d="M558 293.5 H567 M562.5 289 V298" stroke="#000080" stroke-width="1.1"/>
<rect x="582" y="286" width="2" height="16" fill="#000"/>
<rect x="582" y="288" width="1" height="3" fill="#3ee0f0"/><rect x="582" y="294" width="1" height="3" fill="#3ee0f0"/>
</svg>
<div class="code" style="left:43px;top:611px"><span style="color:#e6e6e6"><span class="sc">子程序名</span><span class="sp" style="text-align:left">：</span><span class="sc">验证</span><span class="sa">_</span><span class="sc">心跳</span></span></div>
<div class="code" style="left:43px;top:623px"><span style="color:#e6e6e6"><span class="sc">心跳包</span><span class="sa">,</span><span class="sc">保持与服务端通讯</span><span class="sa">,</span><span class="sc">成功返回</span><span class="sa">true,</span><span class="sc">失败返回</span><span class="sa">false</span></span></div>
<div class="code" style="left:43px;top:635px"><span style="color:#e6e6e6"><span class="sc">返回值类型</span><span class="sp" style="text-align:left">：</span><span class="sc">逻辑型</span></span></div>
<div class="code" style="left:43px;top:647px"><span style="color:#e6e6e6"><span class="sc">参数</span><span class="sa">&lt;1&gt;</span><span class="sc">的名称为</span><span class="sp q" style="text-align:right">“</span><span class="sc">离线回调</span><span class="sp q" style="text-align:left">”</span><span class="sp" style="text-align:left">，</span><span class="sc">类型为</span><span class="sp q" style="text-align:right">“</span><span class="sc">子程序指针</span><span class="sp q" style="text-align:left">”</span><span class="sp" style="text-align:left">，</span><span class="sc">允许接收空参数数据</span><span class="sp" style="text-align:left">。</span></span></div>
</body></html>
